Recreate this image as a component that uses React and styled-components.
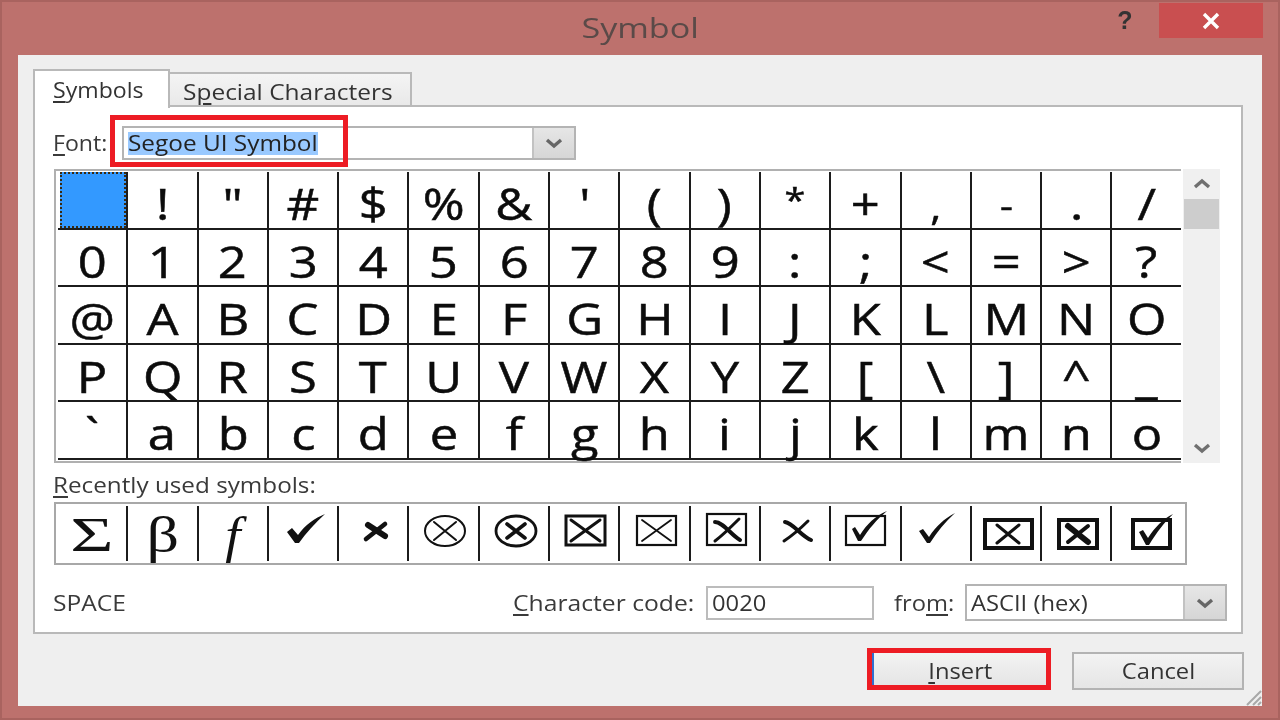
import React from 'react';
import styled, { createGlobalStyle } from 'styled-components';

const GlobalStyle = createGlobalStyle`
  html, body {
    margin: 0;
    padding: 0;
    background: #bd716d;
  }
  body {
    font-family: "Open Sans", "Noto Sans", sans-serif;
    color: #333;
  }
`;

const Frame = styled.div`
  width: 1280px;
  height: 720px;
  box-sizing: border-box;
  display: flex;
  flex-direction: column;
  background: #bd716d;
  border: 2px solid #a9635f;
  overflow: hidden;
  filter: blur(0.4px);
`;

const TitleBar = styled.div`
  height: 53px;
  flex: none;
  display: grid;
  grid-template-columns: 1fr auto 1fr;
  padding: 0 15px;
`;

const Title = styled.div`
  grid-column: 2;
  font-size: 28px;
  line-height: 50px;
  color: #5a4a48;
`;

const WindowButtons = styled.div`
  grid-column: 3;
  display: flex;
  justify-content: flex-end;
  align-items: flex-start;
`;

const HelpButton = styled.div`
  width: 68px;
  text-align: center;
  font-family: "Liberation Sans", sans-serif;
  font-weight: 700;
  font-size: 25px;
  line-height: 36px;
  color: #333;
`;

const CloseButton = styled.div`
  width: 104px;
  height: 35px;
  margin-top: 1px;
  background: #c94f50;
  display: flex;
  align-items: center;
  justify-content: center;
`;

const Client = styled.div`
  flex: 1;
  position: relative;
  margin: 0 16px 12px 16px;
  padding: 14px 19px 0 15px;
  background: #efefef;
  display: flex;
  flex-direction: column;
`;

const Grip = styled.svg`
  position: absolute;
  right: 0;
  bottom: 0;
`;

const Tabs = styled.div`
  display: flex;
  align-items: flex-end;
  height: 38px;
  position: relative;
  z-index: 1;
  margin-bottom: -2px;
`;

const Tab = styled.div`
  box-sizing: border-box;
  width: ${(p) => p.$width}px;
  height: ${(p) => (p.$active ? 39 : 35)}px;
  margin-bottom: ${(p) => (p.$active ? -1 : 0)}px;
  padding-left: ${(p) => (p.$active ? 18 : 13)}px;
  font-size: 21px;
  line-height: ${(p) => (p.$active ? 38 : 36)}px;
  border: 2px solid #b9b9b9;
  border-bottom: ${(p) => (p.$active ? 'none' : '2px solid #b9b9b9')};
  border-left: ${(p) => (p.$active ? '2px solid #b9b9b9' : 'none')};
  background: ${(p) => (p.$active ? '#fff' : 'linear-gradient(#f4f4f4, #e9e9e9)')};
`;

const Panel = styled.div`
  box-sizing: border-box;
  height: 529px;
  background: #fff;
  border: 2px solid #b9b9b9;
  padding: 19px 14px 0 18px;
  display: flex;
  flex-direction: column;
`;

const Wide = styled.span`
  display: inline-block;
  white-space: nowrap;
  transform: scaleX(${(p) => p.$x || 1.16});
  transform-origin: ${(p) => p.$origin || 'left'} center;
`;

const Mnemonic = styled.span`
  text-decoration: underline;
  text-decoration-thickness: 2px;
  text-underline-offset: 3px;
`;

const FontRow = styled.div`
  display: flex;
  align-items: center;
  height: 34px;
`;

const FieldLabel = styled.div`
  flex: none;
  width: ${(p) => (p.$width ? `${p.$width}px` : 'auto')};
  font-size: 21px;
  color: #3a3a3a;
`;

const Combo = styled.div`
  box-sizing: border-box;
  position: relative;
  width: ${(p) => p.$width}px;
  height: ${(p) => p.$height || 34}px;
  border: 2px solid #b4b4b4;
  background: #fff;
  display: flex;
  align-items: center;
  justify-content: space-between;
  font-size: 21px;
  padding-left: 4px;
`;

const Selected = styled.span`
  display: block;
  width: 190px;
  height: 23px;
  line-height: 22px;
  background: #99c9ff;
  color: #222;
`;

const ComboArrow = styled.div`
  flex: none;
  align-self: stretch;
  width: 40px;
  background: linear-gradient(#e6e6e6, #d6d6d6);
  border-left: 2px solid #c2c2c2;
  display: flex;
  align-items: center;
  justify-content: center;
`;

const RedMark = styled.div`
  position: absolute;
  left: -14px;
  top: -13px;
  width: 238px;
  height: 52px;
  box-sizing: border-box;
  border: 5px solid #ed1c24;
  z-index: 2;
`;

const CharMapRow = styled.div`
  display: flex;
  gap: 2px;
  margin: 9px 0 0 1px;
`;

const CharMap = styled.div`
  box-sizing: border-box;
  width: 1127px;
  height: 294px;
  padding: 1px 0 0 2px;
  border: 2px solid #b0b0b0;
  border-right: none;
  display: grid;
  grid-template-columns: repeat(15, 70.3px) 1fr;
  grid-auto-rows: 57.6px;
`;

const CharCell = styled.div`
  box-sizing: border-box;
  position: relative;
  font-size: ${(p) => p.$size || 43}px;
  line-height: 56px;
  text-align: center;
  color: #0c0c0c;
  -webkit-text-stroke: 0.5px #0c0c0c;
  border-bottom: 2px solid #1c1c1c;
  border-right: ${(p) => (p.$last ? 'none' : '2px solid #1c1c1c')};
  padding-top: ${(p) => p.$top}px;
`;

const SelectedCell = styled.div`
  position: absolute;
  inset: 0 0 0 2px;
  background: #3399ff;
  border: 2px dotted #3a2a10;
`;

const ScrollBar = styled.div`
  width: 37px;
  height: 294px;
  background: #f0f0f0;
  display: flex;
  flex-direction: column;
  align-items: center;
`;

const ScrollButton = styled.div`
  flex: none;
  height: 30px;
  display: flex;
  align-items: center;
  justify-content: center;
`;

const ScrollThumb = styled.div`
  width: 35px;
  height: 30px;
  flex: none;
  background: #cdcdcd;
`;

const ScrollSpace = styled.div`
  flex: 1;
`;

const RecentLabel = styled.div`
  height: 39px;
  line-height: 44px;
  font-size: 21px;
  color: #3a3a3a;
`;

const Recent = styled.div`
  box-sizing: border-box;
  width: 1133px;
  height: 63px;
  margin-left: 1px;
  padding-left: 2px;
  border: 2px solid #a8a8a8;
  display: grid;
  grid-template-columns: repeat(15, 70.3px) 1fr;
  grid-auto-rows: 59px;
`;

const RecentCell = styled.div`
  position: relative;
  min-height: 0;
  margin: 2px 0;
  border-right: ${(p) => (p.$last ? 'none' : '2px solid #1c1c1c')};
  display: flex;
  align-items: center;
  justify-content: center;
`;

const SerifGlyph = styled.span`
  font-family: "Liberation Serif", serif;
  font-size: ${(p) => p.$size || 48}px;
  font-style: ${(p) => (p.$italic ? 'italic' : 'normal')};
  line-height: 58px;
  padding-top: ${(p) => p.$top || 0}px;
  color: #111;
  transform: scaleX(${(p) => p.$x || 1.28});
`;

const CodeRow = styled.div`
  display: flex;
  align-items: center;
  margin-top: 19px;
  height: 37px;
`;

const Name = styled.div`
  font-size: 21px;
  color: #3a3a3a;
  margin-right: auto;
`;

const CodeInput = styled.div`
  box-sizing: border-box;
  width: 168px;
  height: 34px;
  margin-left: 11px;
  margin-right: 27px;
  border: 2px solid #bcbcbc;
  background: #fff;
  font-size: 21px;
  line-height: 30px;
  padding-left: 4px;
`;

const FromLabel = styled(FieldLabel)`
  margin-right: 11px;
`;

const Footer = styled.div`
  display: flex;
  justify-content: flex-end;
  align-items: flex-end;
  gap: 21px;
  margin-top: 14px;
  margin-right: -1px;
  height: 42px;
`;

const Highlight = styled.div`
  border: 5px solid #ed1c24;
`;

const Button = styled.div`
  box-sizing: border-box;
  width: ${(p) => p.$width}px;
  height: ${(p) => p.$height}px;
  padding-top: ${(p) => (p.$plain ? 0 : 3)}px;
  border: ${(p) => (p.$plain ? '2px solid #b3b3b3' : 'none')};
  border-left: ${(p) => (p.$plain ? '2px solid #b3b3b3' : '2px solid #2f6fd0')};
  background: linear-gradient(#f3f3f3, #e5e5e5);
  font-size: 21px;
  color: #333;
  display: flex;
  align-items: center;
  justify-content: center;
`;

const Chevron = ({ d, size = 22, color = '#666', width = 3.4 }) => (
  <svg width={size} height={size} viewBox="0 0 22 22">
    <path d={d} fill="none" stroke={color} strokeWidth={width} />
  </svg>
);

const DOWN = 'M4 8 L11 14 L18 8';
const UP = 'M4 14 L11 8 L18 14';

const Art = ({ children }) => (
  <svg width="68" height="57" viewBox="0 0 68 57" fill="none" stroke="#111" strokeLinecap="round">
    {children}
  </svg>
);

const HEAVY_CHECK = 'M18 27 L23 23 L29 30 C36 20 46 13 56 9 C46 18 37 28 30 38 L26 38 Z';
const THIN_CHECK = 'M17 26 L21 24 L27 32 C34 21 42 14 53 8 C43 17 35 27 28 38 L25 38 Z';

const recent = [
  <SerifGlyph key="sum" $x={1.55} $top={3}>Σ</SerifGlyph>,
  <SerifGlyph key="beta" $size={50} $top={3}>β</SerifGlyph>,
  <SerifGlyph key="f" $size={50} $x={1.1} $italic $top={2}>f</SerifGlyph>,
  <Art key="check"><path d={HEAVY_CHECK} fill="#111" stroke="none" /></Art>,
  <Art key="x">
    <path d="M29 20 L46 31" strokeWidth="6" />
    <path d="M46 19 L27 34" strokeWidth="4.6" />
  </Art>,
  <Art key="otimes">
    <ellipse cx="35" cy="26" rx="20" ry="15" strokeWidth="2" />
    <path d="M24 17 L46 35 M46 17 L24 35" strokeWidth="2" />
  </Art>,
  <Art key="otimes-bold">
    <ellipse cx="36" cy="26" rx="20" ry="15" strokeWidth="2.8" />
    <path d="M27 19 L45 33 M45 19 L27 33" strokeWidth="3.6" />
  </Art>,
  <Art key="box-x">
    <rect x="16" y="11" width="39" height="29" strokeWidth="3" />
    <path d="M21 15 L50 36 M50 15 L21 36" strokeWidth="3" />
  </Art>,
  <Art key="box-x-thin">
    <rect x="16" y="11" width="39" height="29" strokeWidth="2.2" />
    <path d="M21 15 L50 36 M50 15 L21 36" strokeWidth="1.8" />
  </Art>,
  <Art key="box-x-script">
    <rect x="16" y="9" width="39" height="31" strokeWidth="2.2" />
    <path d="M24 17 C32 17 40 30 49 35" strokeWidth="4" />
    <path d="M48 14 C42 20 32 30 24 36" strokeWidth="3" />
  </Art>,
  <Art key="x-script">
    <path d="M24 17 C32 18 40 31 50 35" strokeWidth="4" />
    <path d="M47 16 C41 22 32 30 23 36" strokeWidth="3" />
  </Art>,
  <Art key="box-check">
    <rect x="15" y="11" width="39" height="29" strokeWidth="2.2" />
    <path d="M21 24 L24 22 L29 30 C36 19 44 11 56 6 C45 15 38 24 30 36 L27 36 Z" fill="#111" stroke="none" />
  </Art>,
  <Art key="check-thin"><path d={THIN_CHECK} fill="#111" stroke="none" /></Art>,
  <Art key="wide-box-x">
    <rect x="13" y="15" width="47" height="28" strokeWidth="4" />
    <path d="M25 20 L47 38 M47 20 L25 38" strokeWidth="3" />
  </Art>,
  <Art key="thick-box-x">
    <rect x="17" y="15" width="38" height="28" strokeWidth="4" />
    <path d="M26 21 L46 37" strokeWidth="6" />
    <path d="M46 21 L26 37" strokeWidth="4" />
  </Art>,
  <Art key="thick-box-check">
    <rect x="18" y="15" width="37" height="28" strokeWidth="4" />
    <path d="M24 27 L28 25 L33 33 C40 22 48 14 58 9 C49 18 42 27 34 40 L31 40 Z" fill="#111" stroke="none" />
  </Art>,
];

const chars = [
  ' !"#$%&\'()*+,-./',
  '0123456789:;<=>?',
  '@ABCDEFGHIJKLMNO',
  'PQRSTUVWXYZ[\\]^_',
  '`abcdefghijklmno',
];

// segoe draws these much smaller than open sans does
const smallGlyphs = { '*': { size: 32, top: 0 }, '-': { size: 34, top: 5 }, ',': { size: 36, top: 7 } };

const App = () => {
  return (
    <>
      <GlobalStyle />
      <Frame>
        <TitleBar>
          <Title><Wide $x={1.22} $origin="center">Symbol</Wide></Title>
          <WindowButtons>
            <HelpButton>?</HelpButton>
            <CloseButton>
              <svg width="20" height="20" viewBox="0 0 20 20">
                <path d="M3 3 L17 17 M17 3 L3 17" stroke="#fff" strokeWidth="3.4" />
              </svg>
            </CloseButton>
          </WindowButtons>
        </TitleBar>
        <Client>
          <Tabs>
            <Tab $active $width={137}>
              <Wide $x={1.1}><Mnemonic>S</Mnemonic>ymbols</Wide>
            </Tab>
            <Tab $width={242}>
              <Wide $x={1.165}>S<Mnemonic>p</Mnemonic>ecial Characters</Wide>
            </Tab>
          </Tabs>
          <Panel>
            <FontRow>
              <FieldLabel $width={69}>
                <Wide $x={1.1}><Mnemonic>F</Mnemonic>ont:</Wide>
              </FieldLabel>
              <Combo $width={454}>
                <RedMark />
                <Selected><Wide $x={1.16}>Segoe UI Symbol</Wide></Selected>
                <ComboArrow><Chevron d={DOWN} /></ComboArrow>
              </Combo>
            </FontRow>
            <CharMapRow>
              <CharMap>
                {chars.map((row, r) =>
                  row.split('').map((c, i) => (
                    <CharCell
                      key={`${r}-${i}`}
                      $last={i === 15}
                      $size={smallGlyphs[c]?.size}
                      $top={smallGlyphs[c]?.top ?? 4}
                    >
                      {r === 0 && i === 0 && <SelectedCell />}
                      <Wide $x={1.18} $origin="center">{c === ' ' ? '\u00a0' : c}</Wide>
                    </CharCell>
                  ))
                )}
              </CharMap>
              <ScrollBar>
                <ScrollButton><Chevron d={UP} color="#707070" /></ScrollButton>
                <ScrollThumb />
                <ScrollSpace />
                <ScrollButton><Chevron d={DOWN} color="#707070" /></ScrollButton>
              </ScrollBar>
            </CharMapRow>
            <RecentLabel>
              <Wide $x={1.155}><Mnemonic>R</Mnemonic>ecently used symbols:</Wide>
            </RecentLabel>
            <Recent>
              {recent.map((item, i) => (
                <RecentCell key={i} $last={i === 15}>{item}</RecentCell>
              ))}
            </Recent>
            <CodeRow>
              <Name><Wide $x={1.17}>SPACE</Wide></Name>
              <FieldLabel>
                <Wide $x={1.175} $origin="right"><Mnemonic>C</Mnemonic>haracter code:</Wide>
              </FieldLabel>
              <CodeInput><Wide $x={1.13}>0020</Wide></CodeInput>
              <FromLabel>
                <Wide $x={1.13} $origin="right">fro<Mnemonic>m</Mnemonic>:</Wide>
              </FromLabel>
              <Combo $width={262} $height={37}>
                <Wide $x={1.13}>ASCII (hex)</Wide>
                <ComboArrow><Chevron d={DOWN} /></ComboArrow>
              </Combo>
            </CodeRow>
          </Panel>
          <Footer>
            <Highlight>
              <Button $width={174} $height={32}>
                <Wide $x={1.13} $origin="center"><Mnemonic>I</Mnemonic>nsert</Wide>
              </Button>
            </Highlight>
            <Button $plain $width={172} $height={38}>
              <Wide $x={1.13} $origin="center">Cancel</Wide>
            </Button>
          </Footer>
          <Grip width="18" height="18" viewBox="0 0 18 18">
            <path d="M17 3 L3 17 M17 9 L9 17 M17 14 L14 17" stroke="#a8a8a8" strokeWidth="2" />
          </Grip>
        </Client>
      </Frame>
    </>
  );
};

export default App;
